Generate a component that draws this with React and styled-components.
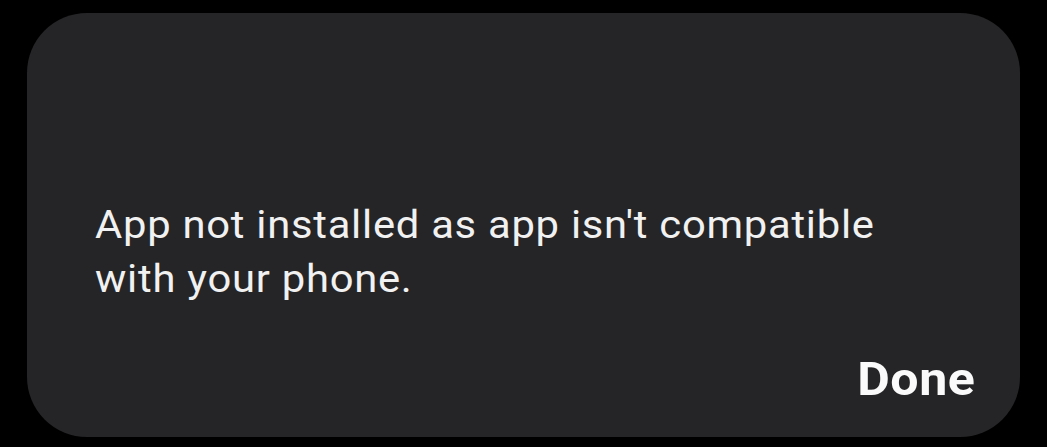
import React from 'react';
import styled, { createGlobalStyle } from 'styled-components';

const GlobalStyle = createGlobalStyle`
  html, body {
    margin: 0;
    padding: 0;
    background: #000;
  }
  body {
    font-family: Roboto, "Noto Sans", sans-serif;
  }
`;

const Screen = styled.div`
  width: 1047px;
  height: 447px;
  padding: 13px 27px 10px 27px;
  box-sizing: border-box;
  background: #000;
`;

const Dialog = styled.div`
  height: 424px;
  box-sizing: border-box;
  background-color: #252527;
  border-radius: 60px;
  padding: 185px 45px 31px 68px;
  display: flex;
  flex-direction: column;
`;

/* the phone font is a little wider than Roboto: stretch it slightly */
const Message = styled.p`
  margin: 0;
  font-size: 39px;
  line-height: 54px;
  letter-spacing: 0.7px;
  color: #f1f1f1;
  font-weight: 400;
  transform: scaleX(1.07);
  transform-origin: left top;
`;

const Actions = styled.div`
  display: flex;
  justify-content: flex-end;
  margin-top: 46px;
`;

const DoneButton = styled.button`
  background: transparent;
  border: none;
  padding: 0;
  color: #fafafa;
  font-family: Roboto, "Noto Sans", sans-serif;
  font-size: 46px;
  font-weight: 700;
  letter-spacing: 0.5px;
  transform: scaleX(1.09);
  transform-origin: right center;
  cursor: pointer;
`;

const App = () => {
  return (
    <>
      <GlobalStyle />
      <Screen>
        <Dialog>
          <Message>
            App not installed as app isn't compatible
            <br />
            with your phone.
          </Message>
          <Actions>
            <DoneButton>Done</DoneButton>
          </Actions>
        </Dialog>
      </Screen>
    </>
  );
};

export default App;
